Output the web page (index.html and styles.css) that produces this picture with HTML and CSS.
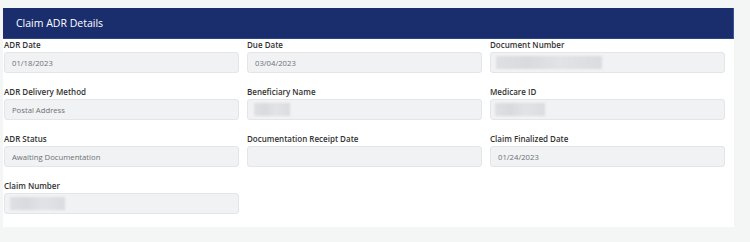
FILE: index.html
```html
<!DOCTYPE html>
<html lang="en">
<head>
    <meta charset="UTF-8">
    <meta name="viewport" content="width=device-width, initial-scale=1.0">
    <title>Claim ADR Details</title>
    <link rel="stylesheet" href="styles.css">
</head>
<body>
    <div class="card">
        <div class="card-header">Claim ADR Details</div>

        <div class="fields">
            <div class="field">
                <label>ADR Date</label>
                <div class="value">01/18/2023</div>
            </div>
            <div class="field">
                <label>Due Date</label>
                <div class="value">03/04/2023</div>
            </div>
            <div class="field">
                <label>Document Number</label>
                <div class="value"><span class="masked masked-long"></span></div>
            </div>

            <div class="field">
                <label>ADR Delivery Method</label>
                <div class="value">Postal Address</div>
            </div>
            <div class="field">
                <label>Beneficiary Name</label>
                <div class="value"><span class="masked masked-short"></span></div>
            </div>
            <div class="field">
                <label>Medicare ID</label>
                <div class="value"><span class="masked masked-mid"></span></div>
            </div>

            <div class="field">
                <label>ADR Status</label>
                <div class="value">Awaiting Documentation</div>
            </div>
            <div class="field">
                <label>Documentation Receipt Date</label>
                <div class="value"></div>
            </div>
            <div class="field">
                <label>Claim Finalized Date</label>
                <div class="value">01/24/2023</div>
            </div>

            <div class="field">
                <label>Claim Number</label>
                <div class="value"><span class="masked masked-claim"></span></div>
            </div>
        </div>
    </div>
</body>
</html>
```

FILE: styles.css
```css
body {
    margin: 0;
    padding: 8px 16px 0 3px;
    background-color: #f4f5f5;
    font-family: 'Open Sans', sans-serif;
    color: #333;
}

.card {
    width: 731px;
    background-color: #fff;
}

.card-header {
    height: 31px;
    box-sizing: border-box;
    padding: 0 13px;
    display: flex;
    align-items: center;
    background-color: #1a2e6e;
    border-right: 1px solid #3b559c;
    border-bottom: 1px solid #2c4588;
    color: #fff;
    font-size: 10.5px;
}

.fields {
    display: grid;
    grid-template-columns: repeat(3, 235px);
    column-gap: 8px;
    padding: 0 9px 0 1px;
}

.field {
    margin-bottom: 13px;
}

.field label {
    display: block;
    height: 11px;
    line-height: 11px;
    margin-bottom: 2px;
    font-size: 8px;
    font-weight: 600;
    color: #333;
}

.value {
    height: 21px;
    box-sizing: border-box;
    padding: 0 7px;
    display: flex;
    align-items: center;
    background-color: #f1f2f4;
    border: 1px solid #e4e5e8;
    border-radius: 3px;
    font-size: 7.7px;
    color: #6f7173;
}

/* blurred-out personal data */
.masked {
    display: block;
    height: 13px;
    background: linear-gradient(90deg, #dfe0e3 0%, #d9dadd 30%, #e2e3e6 60%, #dbdcdf 100%);
    filter: blur(1.2px);
}

.masked-long {
    width: 106px;
    margin-left: -2px;
}

.masked-mid {
    width: 50px;
    margin-left: -3px;
}

.masked-short {
    width: 36px;
    margin-left: -1px;
}

.masked-claim {
    width: 55px;
    margin-left: -2px;
}
```
